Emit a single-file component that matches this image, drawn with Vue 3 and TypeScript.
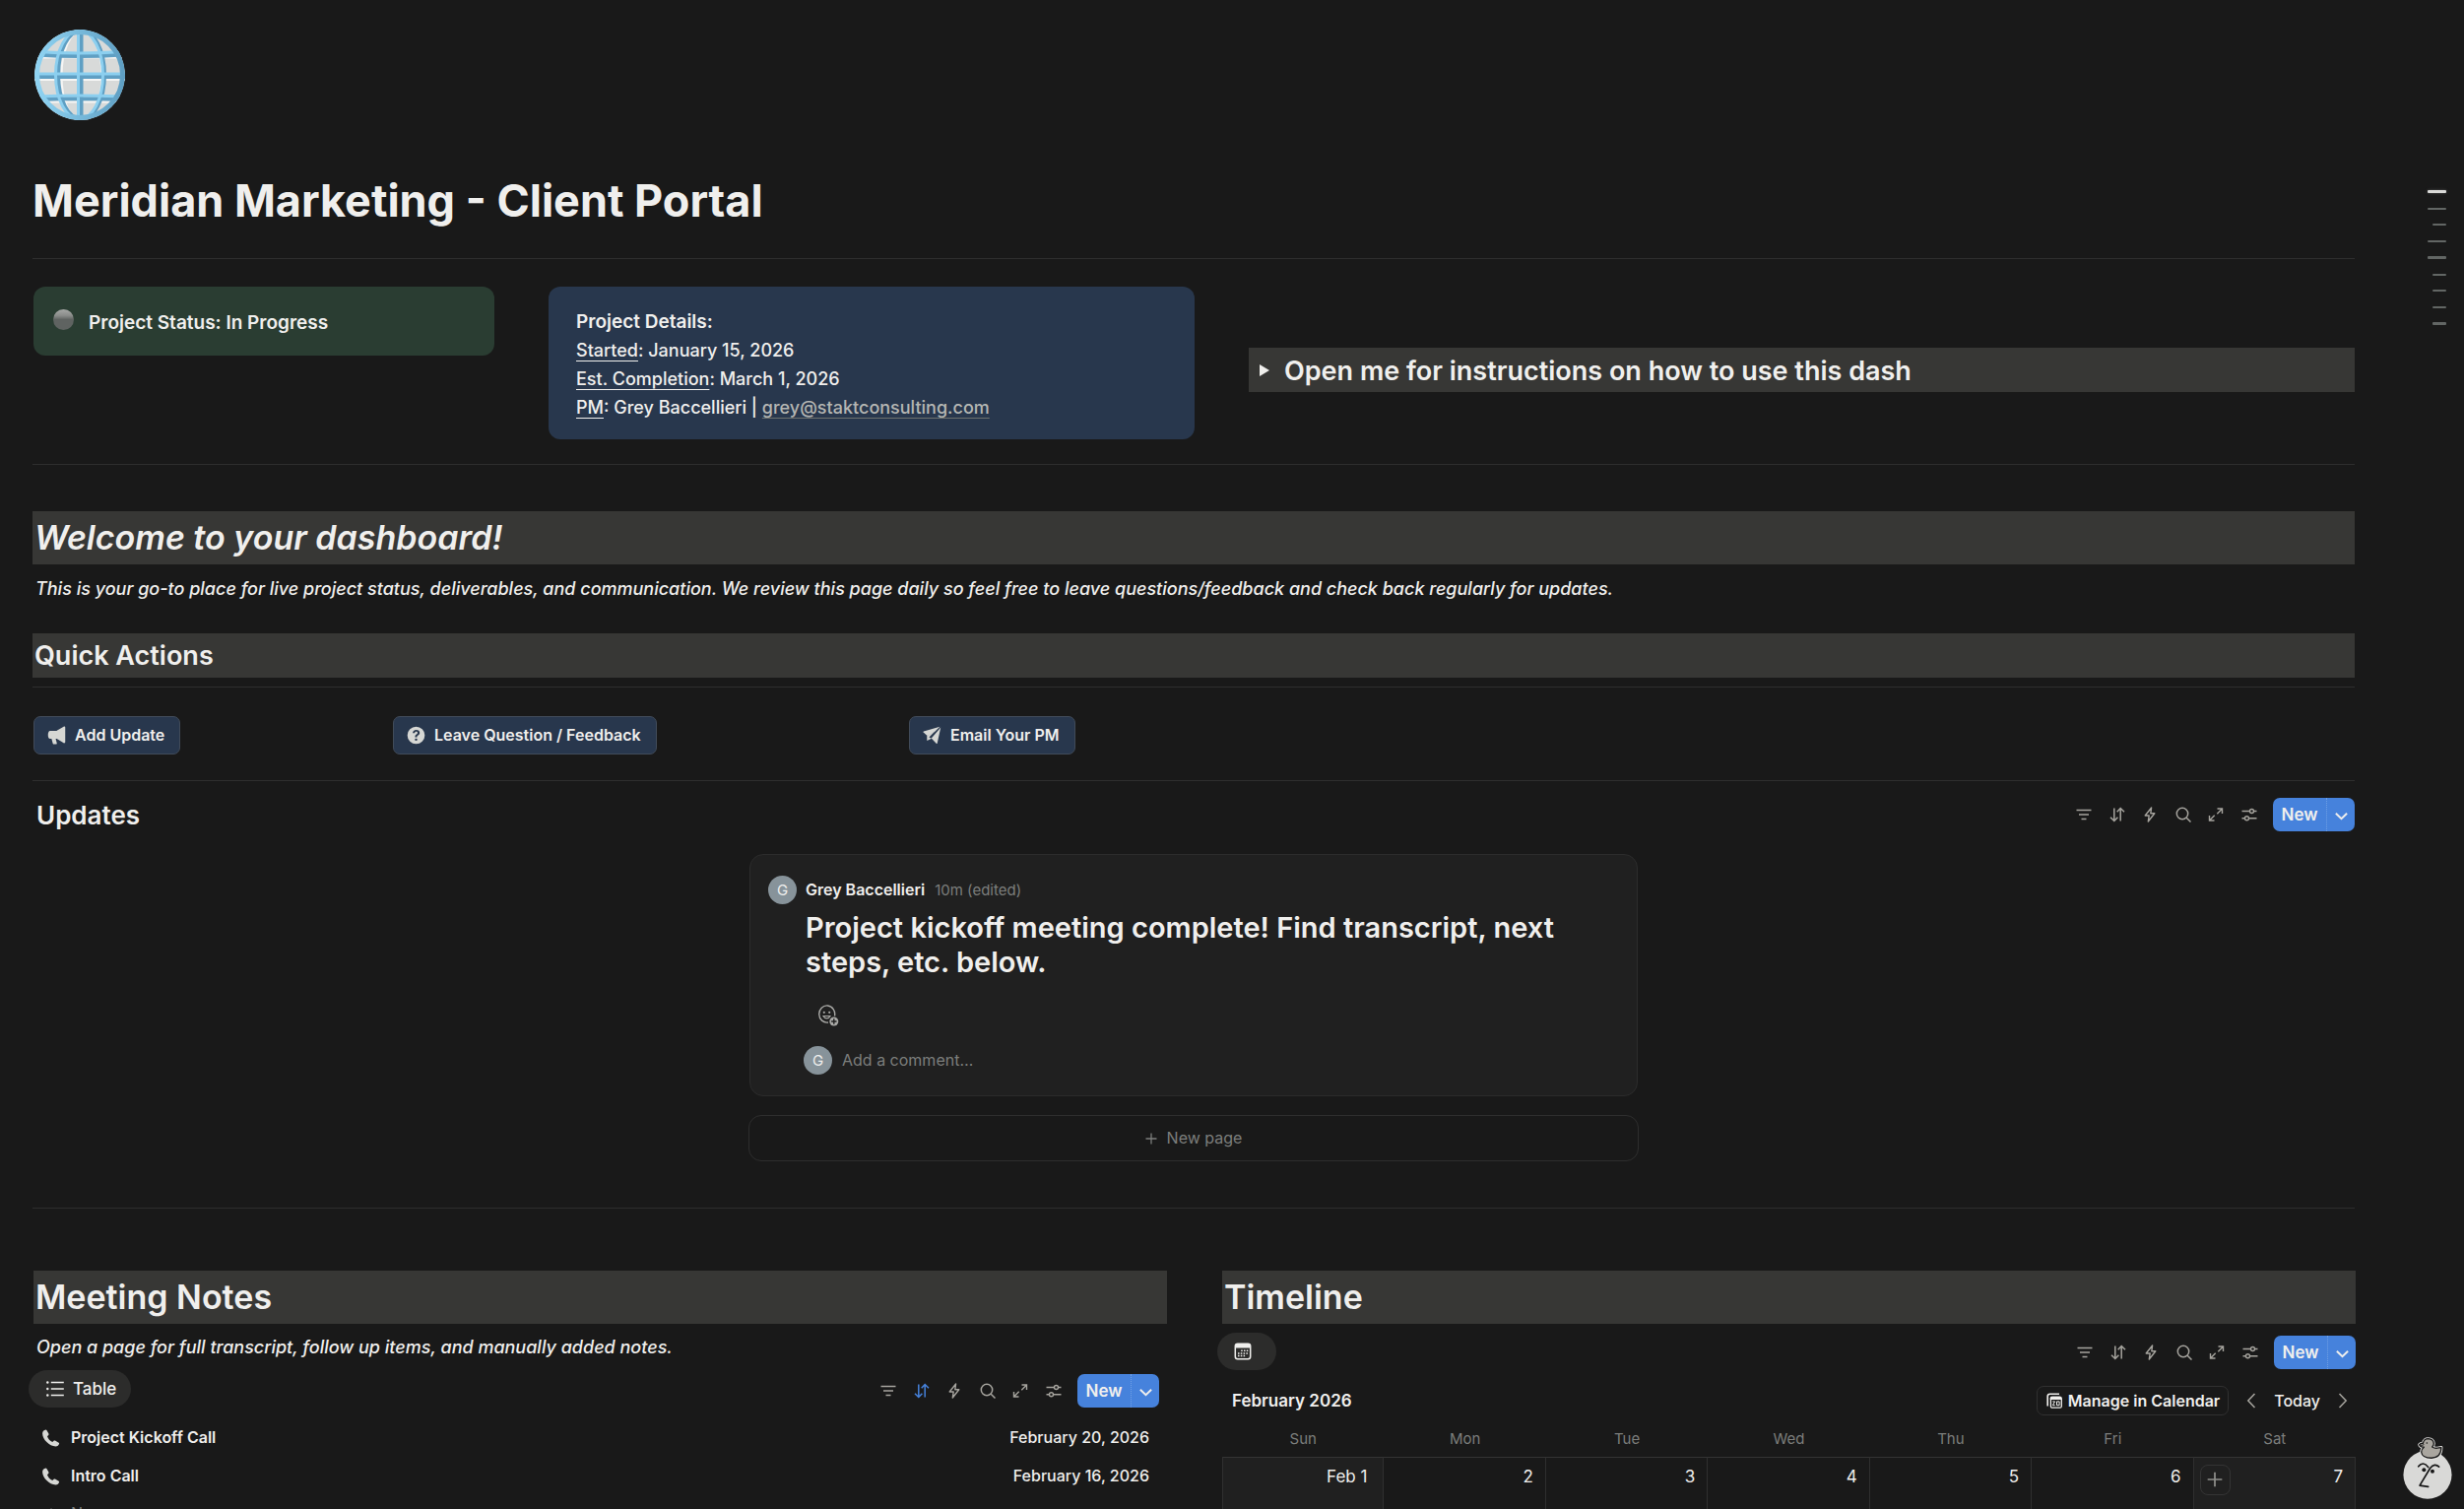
<script setup lang="ts">
interface Tool { id: string; label: string }
interface Meeting { name: string; date: string }

const tools: Tool[] = [
  { id: 'filter', label: 'Filter' },
  { id: 'sort', label: 'Sort' },
  { id: 'bolt', label: 'Automations' },
  { id: 'search', label: 'Search' },
  { id: 'expand', label: 'Open as full page' },
  { id: 'sliders', label: 'View settings' },
]

const actions = [
  { icon: 'megaphone', label: 'Add Update' },
  { icon: 'question', label: 'Leave Question / Feedback' },
  { icon: 'plane', label: 'Email Your PM' },
]

const meetings: Meeting[] = [
  { name: 'Project Kickoff Call', date: 'February 20, 2026' },
  { name: 'Intro Call', date: 'February 16, 2026' },
]

const weekdays = ['Sun', 'Mon', 'Tue', 'Wed', 'Thu', 'Fri', 'Sat']
const days = ['Feb 1', '2', '3', '4', '5', '6', '7']

const outline = ['current', '', 'short', '', 'thick', 'short', 'short', 'short', 'short thick']
</script>

<template>
  <div class="portal">
    <svg class="sprite" aria-hidden="true">
      <symbol id="filter" viewBox="0 0 16 16"><path d="M.5 3.5h15M3 8h10M5.500 12.500h5" fill="none" stroke="currentColor" stroke-width="1.500" /></symbol>
      <symbol id="sort" viewBox="0 0 16 16"><path d="M4.800 1.500v13M1 10.700l3.800 3.800 3.600-3.800M11.200 14.500v-13M7.700 5.300l3.500-3.800L15 5.300" fill="none" stroke="currentColor" stroke-width="1.500" /></symbol>
      <symbol id="bolt" viewBox="0 0 16 16"><path d="M9.600 1 3.200 9h4L6.300 15l6.500-8.200h-4z" fill="none" stroke="currentColor" stroke-width="1.400" stroke-linejoin="round" /></symbol>
      <symbol id="search" viewBox="0 0 16 16"><circle cx="7" cy="7" r="5.700" fill="none" stroke="currentColor" stroke-width="1.500" /><path d="m11.200 11.200 4.300 4.300" stroke="currentColor" stroke-width="1.500" /></symbol>
      <symbol id="expand" viewBox="0 0 16 16"><path d="M9.500 2h5v5M14 2.500 9.300 7.200M6.500 14h-5V9M2 13.500l4.700-4.700" fill="none" stroke="currentColor" stroke-width="1.400" /></symbol>
      <symbol id="sliders" viewBox="0 0 16 16"><path d="M.5 4.500h7.700M12.800 4.500h2.700M.5 11.700h2.700M7.800 11.700h7.700" stroke="currentColor" stroke-width="1.500" /><g fill="none" stroke="currentColor" stroke-width="1.400"><circle cx="10.500" cy="4.500" r="2" /><circle cx="5.500" cy="11.700" r="2" /></g></symbol>
      <symbol id="down" viewBox="0 0 12 12"><path d="m.8 3.500 5.200 5 5.200-5" fill="none" stroke="currentColor" stroke-width="1.800" /></symbol>
      <symbol id="left" viewBox="0 0 10 16"><path d="M8.500 1 1.800 8l6.700 7" fill="none" stroke="currentColor" stroke-width="1.500" /></symbol>
      <symbol id="right" viewBox="0 0 10 16"><path d="m1.500 1 6.700 7-6.700 7" fill="none" stroke="currentColor" stroke-width="1.500" /></symbol>
      <symbol id="plus" viewBox="0 0 12 12"><path d="M6 .5v11M.5 6h11" stroke="currentColor" stroke-width="1.300" /></symbol>
      <symbol id="megaphone" viewBox="0 0 20 20"><path d="M17.500.8c.8-.5 1.700 0 1.700.9v15.500c0 .9-.9 1.400-1.700.9l-7.300-4.300V5.100zM3 5.200h8.500v8.600H9l1.300 4.900c.1.500-.2.900-.7.900H6.900c-.4 0-.8-.3-.9-.7L4.600 13.800H3C1.600 13.800.8 12 .8 9.500S1.600 5.200 3 5.200z" fill="currentColor" /></symbol>
      <symbol id="question" viewBox="0 0 20 20"><path fill-rule="evenodd" d="M10 .7a9.300 9.300 0 1 1 0 18.600A9.300 9.300 0 0 1 10 .7zM6.400 7.700h2.100c0-1 .7-1.600 1.600-1.600s1.500.5 1.500 1.300c0 .7-.4 1.100-1.200 1.600-1 .6-1.500 1.200-1.500 2.500v.5H11v-.4c0-.7.3-1 1.200-1.600 1-.6 1.700-1.400 1.700-2.700 0-1.900-1.500-3.100-3.700-3.100-2.300 0-3.800 1.300-3.800 3.500zM10 13.300a1.300 1.300 0 1 0 0 2.600 1.300 1.300 0 0 0 0-2.600z" fill="currentColor" /></symbol>
      <symbol id="plane" viewBox="0 0 20 20"><path d="M18.300.900 1 5.700c-.6.200-.7.800-.3 1.200l4.400 4L13.500 5.500z" fill="currentColor" /><path d="M19.200 1.700 9.200 13.200l5.200 5.600c.4.400 1 .2 1.100-.4z" fill="currentColor" /><path d="M4.500 15.800V10.900l9.500-6.100-7.300 7.400 2.800 1.300z" fill="currentColor" /></symbol>
      <symbol id="list" viewBox="0 0 18 18"><path d="M4.800 2.500h13M4.800 9h13M4.800 15.500h13" stroke="currentColor" stroke-width="1.600" /><circle cx="1.300" cy="2.500" r="1.200" fill="currentColor" /><circle cx="1.300" cy="9" r="1.200" fill="currentColor" /><circle cx="1.300" cy="15.500" r="1.200" fill="currentColor" /></symbol>
      <symbol id="calendar" viewBox="0 0 18 18"><rect x="1.300" y="1.300" width="15.400" height="15.400" rx="2.500" fill="none" stroke="currentColor" stroke-width="1.500" /><path d="M1.300 5.500V3.800a2.500 2.500 0 0 1 2.500-2.500h10.400a2.500 2.500 0 0 1 2.500 2.500v1.700z" fill="currentColor" /><path d="M7.200 8.200h7.100M4 10.900h10.300M4 13.600h7.500" stroke="currentColor" stroke-width="1.500" stroke-dasharray="1.500 1.300" /></symbol>
      <symbol id="calendars" viewBox="0 0 16 16"><path d="M1.200 13.500V3.500a2.300 2.300 0 0 1 2.300-2.300h9.500" fill="none" stroke="currentColor" stroke-width="1.600" /><path d="M3.800 7V5.300c0-.9.600-1.500 1.500-1.500h8.400c.9 0 1.500.6 1.500 1.500V7z" fill="currentColor" /><rect x="4.400" y="4.300" width="10.900" height="10.900" rx="1.500" fill="none" stroke="currentColor" stroke-width="1.300" /><path d="M6.300 8.900h2.300l-2.300 3.800h2.400M10.500 8.900h2.600v3.800h-2.600z" fill="none" stroke="currentColor" stroke-width="1" /></symbol>
      <symbol id="phone" viewBox="0 0 18 18"><path d="M1 1.700C1.700.900 2.600.500 3.500.400c.4 0 .7.200.9.500l2 3.700c.3.500.2 1-.2 1.400L5 7.200c.8 2.500 2.800 4.700 5.300 5.900l1.300-1.300c.4-.4.9-.4 1.300-.2l3.800 2.100c.4.200.5.600.4 1-.4 1.600-1.800 2.700-3.600 2.700C7 17.400.300 10.300.100 4.500.100 3.400.4 2.400 1 1.700z" fill="currentColor" /></symbol>
      <symbol id="react" viewBox="0 0 22 22"><path d="M17.500 11.500A8 8.600 0 1 0 11 18" fill="none" stroke="currentColor" stroke-width="1.400" /><path d="M6 11.500c1.500 3.200 5.500 3.200 7 0z" fill="none" stroke="currentColor" stroke-width="1.200" /><circle cx="6.800" cy="7.800" r="1.100" fill="currentColor" /><circle cx="12.200" cy="7.800" r="1.100" fill="currentColor" /><circle cx="16.800" cy="17" r="4.500" fill="currentColor" /><path d="M16.800 14.300v5.400M14.100 17h5.400" stroke="#202020" stroke-width="1.400" /></symbol>
    </svg>

    <nav class="outline" aria-label="Page outline">
      <a v-for="(mark, i) in outline" :key="i" href="#" :class="mark" :aria-label="`Section ${i + 1}`"></a>
    </nav>

    <main>
      <svg class="globe" viewBox="0 0 92 92" role="img" aria-label="Globe">
        <defs>
          <clipPath id="ball"><circle cx="46" cy="46" r="46" /></clipPath>
          <linearGradient id="shell" x1="0" y1="0" x2="1" y2="0"><stop offset="0" stop-color="#8fd3f2" /><stop offset="1" stop-color="#5f9fc3" /></linearGradient>
        </defs>
        <g clip-path="url(#ball)" fill="none">
          <circle cx="46" cy="46" r="46" fill="#d8dad9" />
          <g stroke="#f6f6f5" stroke-width="2"><path d="M0 28.500h92M0 51h92M0 73.500h92" /><ellipse cx="48" cy="47" rx="20.500" ry="46" /></g>
          <g stroke="#5f9fc3" stroke-width="4"><path d="M3 25.500q43 3 86 0M0 48h92M3 71q43 -2 86 0M47.500 0v92" /><ellipse cx="47.500" cy="46" rx="23.500" ry="45" /></g>
          <g stroke="#8ccfef" stroke-width="3"><path d="M3 22.500q43 3 86 0M0 45h92M3 68q43 -2 86 0M44.500 0v92" /><ellipse cx="45.500" cy="46" rx="24" ry="45" /></g>
          <circle cx="46" cy="46" r="43.500" stroke="url(#shell)" stroke-width="5" />
        </g>
      </svg>

      <h1>Meridian Marketing - Client Portal</h1>
      <hr class="rule-title">

      <section class="summary">
        <div class="callout status"><span class="orb"></span><strong>Project Status: In Progress</strong></div>
        <div class="callout details">
          <strong>Project Details:</strong>
          <span><u>Started</u>: January 15, 2026</span>
          <span><u>Est. Completion</u>: March 1, 2026</span>
          <span><u>PM</u>: Grey Baccellieri | <a href="mailto:grey@staktconsulting.com">grey@staktconsulting.com</a></span>
        </div>
        <button class="toggle" type="button" aria-expanded="false"><span class="triangle"></span>Open me for instructions on how to use this dash</button>
      </section>
      <hr class="rule-summary">

      <h2 class="bar welcome"><em>Welcome to your dashboard!</em></h2>
      <p class="lead">This is your go-to place for live project status, deliverables, and communication. We review this page daily so feel free to leave questions/feedback and check back regularly for updates.</p>

      <h3 class="bar quick">Quick Actions</h3>
      <hr class="rule-quick">
      <div class="actions">
        <div v-for="a in actions" :key="a.label">
          <button type="button" class="action"><svg><use :href="`#${a.icon}`" /></svg>{{ a.label }}</button>
        </div>
      </div>
      <hr class="rule-actions">

      <section>
        <header class="view-head updates-head">
          <h3 class="updates-title">Updates</h3>
          <div class="toolbar">
            <div class="tools"><button v-for="t in tools" :key="t.id" type="button" :aria-label="t.label"><svg><use :href="`#${t.id}`" /></svg></button></div>
            <div class="new"><button type="button">New</button><button type="button" aria-label="More options"><svg><use href="#down" /></svg></button></div>
          </div>
        </header>
        <div class="feed">
          <article class="post">
            <span class="avatar">G</span>
            <div class="post-body">
              <div class="byline"><strong>Grey Baccellieri</strong><span>10m (edited)</span></div>
              <h4>Project kickoff meeting complete! Find transcript, next steps, etc. below.</h4>
              <button type="button" class="react" aria-label="Add reaction"><svg><use href="#react" /></svg></button>
              <div class="comment"><span class="avatar">G</span><input type="text" placeholder="Add a comment…" aria-label="Add a comment"></div>
            </div>
          </article>
          <button type="button" class="new-page"><svg><use href="#plus" /></svg>New page</button>
        </div>
      </section>
      <hr class="rule-updates">

      <div class="columns">
        <section>
          <h2 class="bar">Meeting Notes</h2>
          <p class="lead notes-lead">Open a page for full transcript, follow up items, and manually added notes.</p>
          <header class="view-head notes-head">
            <button type="button" class="pill"><svg><use href="#list" /></svg>Table</button>
            <div class="toolbar">
              <div class="tools"><button v-for="t in tools" :key="t.id" type="button" :aria-label="t.label" :class="{ active: t.id === 'sort' }"><svg><use :href="`#${t.id}`" /></svg></button></div>
              <div class="new"><button type="button">New</button><button type="button" aria-label="More options"><svg><use href="#down" /></svg></button></div>
            </div>
          </header>
          <table class="notes" aria-label="Meeting notes">
            <tbody>
              <tr v-for="m in meetings" :key="m.name">
                <td><a href="#"><svg><use href="#phone" /></svg>{{ m.name }}</a></td>
                <td>{{ m.date }}</td>
              </tr>
            </tbody>
          </table>
          <button type="button" class="add-row"><svg><use href="#plus" /></svg>New page</button>
        </section>

        <section>
          <h2 class="bar">Timeline</h2>
          <header class="view-head time-head">
            <button type="button" class="pill icon-pill" aria-label="Calendar view"><svg><use href="#calendar" /></svg></button>
            <div class="toolbar">
              <div class="tools"><button v-for="t in tools" :key="t.id" type="button" :aria-label="t.label"><svg><use :href="`#${t.id}`" /></svg></button></div>
              <div class="new"><button type="button">New</button><button type="button" aria-label="More options"><svg><use href="#down" /></svg></button></div>
            </div>
          </header>
          <div class="month">
            <strong>February 2026</strong>
            <div class="month-nav">
              <button type="button" class="manage"><svg><use href="#calendars" /></svg>Manage in Calendar</button>
              <button type="button" class="step" aria-label="Previous month"><svg><use href="#left" /></svg></button>
              <button type="button" class="today">Today</button>
              <button type="button" class="step" aria-label="Next month"><svg><use href="#right" /></svg></button>
            </div>
          </div>
          <table class="calendar" aria-label="February 2026">
            <thead><tr><th v-for="d in weekdays" :key="d" scope="col">{{ d }}</th></tr></thead>
            <tbody>
              <tr>
                <td v-for="(d, i) in days" :key="d" :class="{ weekend: i === 0 || i === 6 }">
                  <div class="day">
                    <button v-if="i === 6" type="button" class="add-day" aria-label="Add page"><svg><use href="#plus" /></svg></button>
                    <span>{{ d }}</span>
                  </div>
                </td>
              </tr>
            </tbody>
          </table>
        </section>
      </div>
    </main>

    <button type="button" class="assistant" aria-label="Ask the assistant">
      <svg viewBox="1200 350 150 196">
        <circle cx="1275" cy="471" r="74" fill="#d9d9d7" />
        <g stroke-linejoin="round">
          <path d="M1250 379q4-5 11-4 3-14 16-14 16 1 17 15 0 6-5 10 9 6 20 3 5-1 8-1-1 32-30 32-29 0-31-18 0-9 8-15-12 0-14-8z" fill="#e6e5e2" stroke="#e6e5e2" stroke-width="9" />
          <path d="M1250 379q4-5 11-4 3-14 16-14 16 1 17 15 0 6-5 10 9 6 20 3 5-1 8-1-1 32-30 32-29 0-31-18 0-9 8-15-12 0-14-8z" fill="#aaa69f" stroke="#1b1b1b" stroke-width="4" />
        </g>
        <path d="M1250 380q8 3 14-1" fill="none" stroke="#1b1b1b" stroke-width="3" />
        <circle cx="1273" cy="374" r="2.500" fill="#1b1b1b" />
        <g fill="none" stroke="#171717" stroke-width="5" stroke-linecap="round" stroke-linejoin="round">
          <path d="M1247 446q14-18 30 2M1310 447q-13-13-27 4l-32 53 26 4" />
        </g>
        <circle cx="1264" cy="456" r="6" fill="#171717" /><circle cx="1290" cy="461" r="6" fill="#171717" />
      </svg>
    </button>
  </div>
</template>

<style>
html,
body {
  background: #191919;
}
</style>

<style scoped>
.portal,
.portal * {
  box-sizing: border-box;
}

.portal {
  height: 100vh;
  overflow: hidden;
  background: #191919;
  color: #f0efed;
  font-family: Inter, "Liberation Sans", sans-serif;
  font-size: 16px;
  line-height: 29px;
}

.sprite {
  position: absolute;
  width: 0;
  height: 0;
}

main {
  padding: 30px 111px 0 33px;
}

h1, h2, h3, h4, p {
  margin: 0;
  font-weight: 600;
}

button {
  padding: 0;
  border: 0;
  background: none;
  color: inherit;
  font: inherit;
  display: flex;
  align-items: center;
  white-space: nowrap;
}

svg {
  display: block;
  flex: none;
}

hr {
  height: 1px;
  margin: 0;
  border: 0;
  background: #2e2e2e;
}

.globe {
  width: 92px;
  height: 92px;
  margin-left: 2px;
}

h1 {
  margin-top: 53px;
  font-size: 45px;
  font-weight: 700;
  line-height: 58px;
}

.rule-title { margin-top: 29px; }
.rule-summary { margin-top: 25px; }
.rule-quick { margin-top: 9px; }
.rule-actions { margin-top: 26px; }
.rule-updates { margin-top: 47px; }

.summary {
  display: grid;
  grid-template-columns: 468fr 656fr 1123fr;
  gap: 55px;
  align-items: start;
  margin-top: 28px;
  padding-left: 1px;
  font-size: 18px;
  font-weight: 500;
}

.callout {
  border-radius: 12px;
}

.callout strong {
  font-size: 19px;
  font-weight: 600;
}

.status {
  display: flex;
  align-items: center;
  gap: 15px;
  height: 70px;
  padding: 2px 20px 0;
  background: #2a3d32;
}

.orb {
  width: 21px;
  height: 21px;
  margin-bottom: 6px;
  border-radius: 50%;
  background: linear-gradient(#a6a8a6 0, #8b8d8b 30%, #5f6361 50%, #5f6361);
}

.details {
  display: flex;
  flex-direction: column;
  padding: 21px 28px 18px;
  background: #28374d;
}

.details u {
  text-decoration-thickness: 1px;
  text-underline-offset: 4px;
  text-decoration-skip-ink: none;
}

.details a {
  color: #b5b6b3;
  text-decoration-color: #6c716e;
  text-decoration-thickness: 1px;
  text-underline-offset: 4px;
  text-decoration-skip-ink: none;
}

.toggle {
  gap: 15px;
  height: 45px;
  margin-top: 62px;
  padding: 1px 0 0 11px;
  background: #373735;
  font-size: 27px;
  font-weight: 600;
}

.triangle {
  border: 6px solid transparent;
  border-left: 10px solid #f0efed;
  border-right: 0;
}

.bar {
  padding: 0 2px;
  background: #373735;
  font-size: 34px;
  line-height: 54px;
}

.welcome { margin-top: 47px; }

.lead {
  margin-top: 10px;
  padding-left: 3px;
  font-size: 18px;
  font-style: italic;
  font-weight: 500;
}

.quick {
  margin-top: 31px;
  padding-top: 1px;
  font-size: 27px;
  line-height: 44px;
}

.actions {
  display: grid;
  grid-template-columns: 365fr 524fr 1468fr;
  margin-top: 29px;
  padding-left: 1px;
}

.action {
  gap: 9px;
  height: 39px;
  padding: 0 15px 0 13px;
  border: 1px solid #414b59;
  border-radius: 7px;
  background: #28374d;
  font-weight: 600;
}

.action svg {
  width: 19px;
  height: 19px;
  color: #d6d7d4;
}

.view-head {
  display: flex;
  justify-content: space-between;
  align-items: center;
}

.updates-head { margin-top: 17px; }

.updates-title {
  padding-left: 4px;
  font-size: 26px;
}

.toolbar {
  display: flex;
  align-items: center;
  gap: 16px;
}

.tools {
  display: flex;
  justify-content: space-between;
  width: 184px;
  color: #a6a49e;
}

.tools svg {
  width: 16px;
  height: 16px;
}

.tools .active {
  color: #4682dc;
}

.new {
  display: flex;
  width: 83px;
  height: 34px;
  border-radius: 7px;
  background: #4682dc;
  font-size: 17px;
  font-weight: 600;
}

.new button:first-child {
  width: 54px;
  justify-content: center;
}

.new button:last-child {
  flex: 1;
  justify-content: center;
  border-left: 1px dotted #6f9fe4;
}

.new svg {
  width: 13px;
  height: 13px;
  margin-top: 3px;
}

.feed {
  width: 904px;
  max-width: 100%;
  margin: 23px auto 0;
}

.post {
  display: flex;
  gap: 9px;
  min-height: 246px;
  margin: 0 1px;
  padding: 21px 60px 0 18px;
  border: 1px solid #2c2c2c;
  border-radius: 14px;
  background: #202020;
}

.avatar {
  flex: none;
  width: 29px;
  height: 29px;
  border-radius: 50%;
  background: #87939a;
  font-size: 15px;
  text-align: center;
}

.byline {
  display: flex;
  gap: 10px;
}

.byline strong {
  font-weight: 600;
}

.byline span {
  color: #7c7e7c;
  font-size: 15px;
}

.post h4 {
  margin-top: 6px;
  font-size: 29px;
  line-height: 35px;
}

.react {
  margin: 26px 0 0 12px;
  color: #a9a9a6;
}

.react svg {
  width: 22px;
  height: 22px;
}

.comment {
  display: flex;
  gap: 10px;
  margin: 20px 0 0 -2px;
}

.comment input {
  flex: 1;
  height: 29px;
  padding: 0;
  border: 0;
  outline: 0;
  background: none;
  color: inherit;
  font: inherit;
}

.comment input::placeholder {
  color: #7c7e7c;
  opacity: 1;
}

.new-page {
  justify-content: center;
  gap: 10px;
  width: 100%;
  height: 47px;
  margin-top: 19px;
  border: 1px solid #2e2e2e;
  border-radius: 13px;
  color: #7c7e7c;
}

.new-page svg,
.add-row svg {
  width: 12px;
  height: 12px;
}

.columns {
  display: grid;
  grid-template-columns: 1fr 1fr;
  gap: 56px;
  margin: 63px -1px 0 0;
  padding-left: 1px;
}

.notes-lead { margin-top: 9px; }

.notes-head {
  align-items: flex-end;
  margin: 9px 8px 0 -5px;
}

.pill {
  gap: 9px;
  height: 38px;
  padding: 0 15px 0 18px;
  border-radius: 19px;
  background: #2c2c2b;
  font-size: 17px;
  font-weight: 500;
}

.pill svg {
  width: 18px;
  height: 18px;
}

.icon-pill {
  width: 60px;
  padding: 0 17px;
}

.notes {
  width: 100%;
  margin-top: 11px;
  border-collapse: collapse;
  font-weight: 600;
}

.notes td {
  height: 39px;
  padding: 0 18px 0 9px;
}

.notes td:last-child {
  text-align: right;
  font-weight: 500;
}

.notes a {
  display: flex;
  align-items: center;
  gap: 11px;
  color: inherit;
  text-decoration: none;
}

.notes svg {
  width: 18px;
  height: 18px;
  color: #d6d7d4;
}

.add-row {
  gap: 14px;
  height: 37px;
  padding-left: 12px;
  color: #7c7e7c;
}

.time-head {
  margin: 9px 0 0 -5px;
}

.time-head .toolbar {
  padding-top: 2px;
}

.month {
  display: flex;
  justify-content: space-between;
  align-items: center;
  margin-top: 16px;
  padding-left: 10px;
}

.month strong {
  font-size: 17px;
  font-weight: 600;
}

.month-nav {
  display: flex;
  align-items: center;
  padding-right: 8px;
}

.manage {
  gap: 6px;
  height: 30px;
  padding: 0 8px 0 9px;
  border: 1px solid #303030;
  border-radius: 7px;
  font-weight: 600;
}

.manage svg {
  width: 16px;
  height: 16px;
}

.step svg {
  width: 10px;
  height: 16px;
  color: #a6a49e;
}

.manage + .step {
  margin-left: 18px;
}

.today {
  margin: 0 18px;
  font-weight: 500;
}

.calendar {
  width: 100%;
  margin-top: 5px;
  border-collapse: separate;
  border-spacing: 0;
  table-layout: fixed;
}

.calendar th {
  height: 37px;
  padding: 0 0 1px;
  color: #7c7e7c;
  font-size: 15px;
  font-weight: 400;
}

.calendar td {
  height: 160px;
  padding: 0;
  border-top: 1px solid #343434;
  border-right: 1px solid #2f2f2f;
  vertical-align: top;
}

.calendar td:first-child {
  border-left: 1px solid #2f2f2f;
}

.calendar .weekend {
  background: #202020;
}

.day {
  display: flex;
  align-items: center;
  height: 44px;
  padding: 0 12px 0 6px;
  font-size: 17px;
}

.calendar td:first-child .day {
  padding-right: 16px;
}

.day span {
  margin: 0 0 6px auto;
}

.add-day {
  justify-content: center;
  width: 31px;
  height: 31px;
  border: 1px solid #343434;
  border-radius: 8px;
  color: #8f8f8b;
}

.add-day svg {
  width: 16px;
  height: 16px;
}

.outline {
  position: fixed;
  top: 193px;
  right: 18px;
  display: flex;
  flex-direction: column;
  justify-content: space-between;
  align-items: flex-end;
  height: 137px;
}

.outline a {
  width: 19px;
  height: 2px;
  border-radius: 1px;
  background: #626664;
}

.outline .short { width: 14px; }
.outline .thick { height: 3px; }

.outline .current {
  height: 3px;
  background: #d9d9d7;
  box-shadow: 0 0 3px #555;
}

.assistant {
  position: fixed;
  right: 12px;
  bottom: 10px;
}

.assistant svg {
  width: 50px;
  height: 65px;
}
</style>
